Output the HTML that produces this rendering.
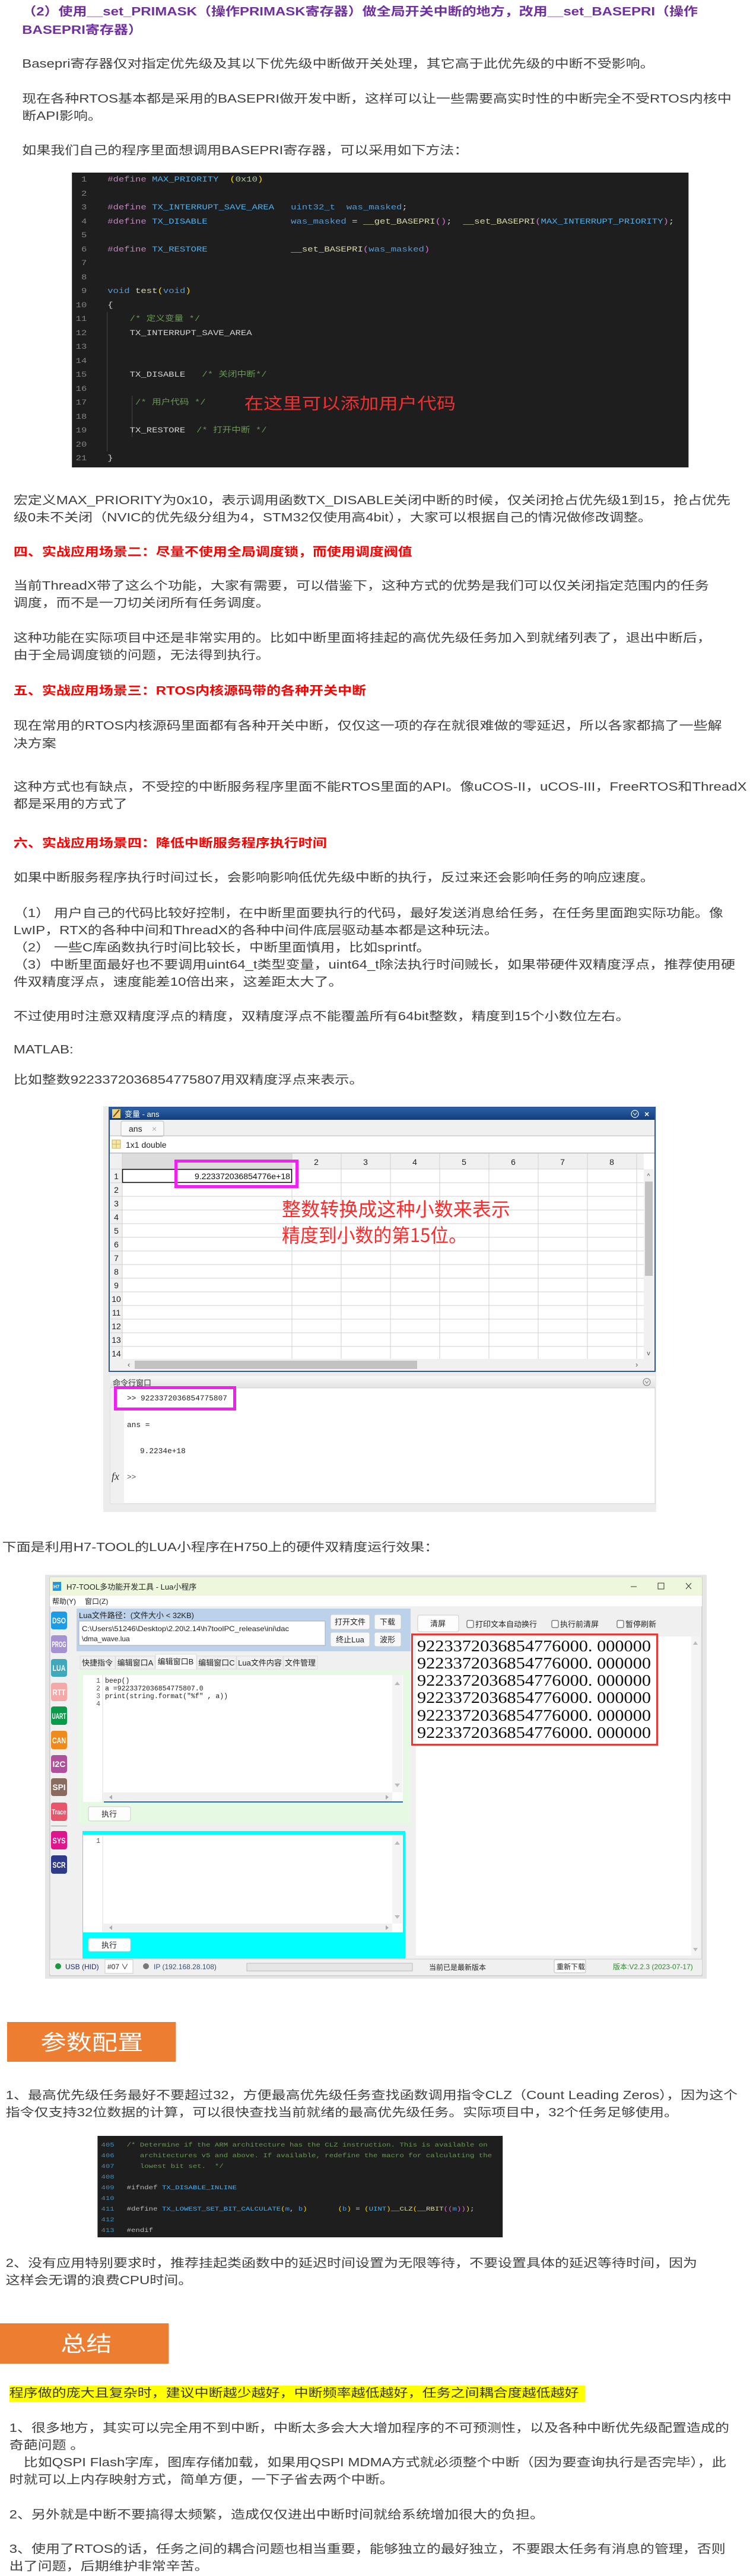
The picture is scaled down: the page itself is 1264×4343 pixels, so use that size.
<!DOCTYPE html>
<html><head><meta charset="utf-8">
<style>
html,body{margin:0;padding:0;background:#fff;}
body{width:1264px;height:4343px;position:relative;overflow:hidden;}
#w{position:absolute;left:0;top:0;width:1054px;height:4343px;transform:scaleX(1.2);transform-origin:0 0;}
.t{position:absolute;white-space:nowrap;font:20px/29px "Liberation Sans","Noto Sans CJK SC",sans-serif;color:#404040;}
.hp{color:#7030a0;font-weight:bold;line-height:31px;}
.hr{color:#ff0000;font-weight:bold;}
.code{position:absolute;background:#1e1e1e;overflow:hidden;font-family:"Liberation Mono","Noto Sans CJK SC",monospace;}
.code .ln{position:absolute;left:0;top:0;text-align:right;color:#858585;white-space:pre;}
.code .cd{position:absolute;top:0;color:#d4d4d4;white-space:pre;}
.k{color:#c586c0}.m{color:#4fb0f0}.b{color:#569cd6}.y{color:#ffd700}.n{color:#b5cea8}.f{color:#dcdcaa}.c{color:#6a9955}.p{color:#da70d6}
.box{position:absolute;background:#ed7d31;color:#fff;font:36px/1 "Noto Sans CJK SC","Liberation Sans",sans-serif;white-space:nowrap;}
svg{position:absolute;}
</style></head><body>
<div id="w">
<div class="t hp" style="left:31px;top:5px">（2）使用__set_PRIMASK（操作PRIMASK寄存器）做全局开关中断的地方，改用__set_BASEPRI（操作<br>BASEPRI寄存器）</div>
<div class="t" style="left:31px;top:94px">Basepri寄存器仅对指定优先级及其以下优先级中断做开关处理，其它高于此优先级的中断不受影响。</div>
<div class="t" style="left:31px;top:153px">现在各种RTOS基本都是采用的BASEPRI做开发中断，这样可以让一些需要高实时性的中断完全不受RTOS内核中<br>断API影响。</div>
<div class="t" style="left:31px;top:240px">如果我们自己的程序里面想调用BASEPRI寄存器，可以采用如下方法：</div>

<div class="code" style="left:101px;top:291px;width:866px;height:497px;font-size:13px;line-height:23.5px;">
<div class="ln" style="width:21px;padding-top:0px">1
2
3
4
5
6
7
8
9
10
11
12
13
14
15
16
17
18
19
20
21</div>
<div style="position:absolute;left:49px;top:235px;width:1px;height:235px;background:#404040"></div>
<div style="position:absolute;left:84px;top:376px;width:1px;height:70px;background:#404040"></div>
<div class="cd" style="left:50px"><span class="k">#define</span> <span class="m">MAX_PRIORITY</span>  <span class="y">(</span><span class="n">0x10</span><span class="y">)</span>

<span class="k">#define</span> <span class="m">TX_INTERRUPT_SAVE_AREA</span>   <span class="b">uint32_t</span>  <span class="b">was_masked</span>;
<span class="k">#define</span> <span class="m">TX_DISABLE</span>               <span class="b">was_masked</span> = <span class="f">__get_BASEPRI</span><span class="p">()</span>;  <span class="f">__set_BASEPRI</span><span class="p">(</span><span class="m">MAX_INTERRUPT_PRIORITY</span><span class="p">)</span>;

<span class="k">#define</span> <span class="m">TX_RESTORE</span>               <span class="f">__set_BASEPRI</span><span class="p">(</span><span class="b">was_masked</span><span class="p">)</span>


<span class="b">void</span> <span class="f">test</span><span class="y">(</span><span class="b">void</span><span class="y">)</span>
{
    <span class="c">/* 定义变量 */</span>
    TX_INTERRUPT_SAVE_AREA


    TX_DISABLE   <span class="c">/* 关闭中断*/</span>

     <span class="c">/* 用户代码 */</span>

    TX_RESTORE  <span class="c">/* 打开中断 */</span>

}</div>
<div style="position:absolute;left:242px;top:372px;font:27px/32px 'Noto Sans CJK SC',sans-serif;color:#f03030;white-space:nowrap">在这里可以添加用户代码</div>
</div>

<div class="t" style="left:19px;top:830px">宏定义MAX_PRIORITY为0x10，表示调用函数TX_DISABLE关闭中断的时候，仅关闭抢占优先级1到15，抢占优先<br>级0未不关闭（NVIC的优先级分组为4，STM32仅使用高4bit），大家可以根据自己的情况做修改调整。</div>
<div class="t hr" style="left:19px;top:917px">四、实战应用场景二：尽量不使用全局调度锁，而使用调度阀值</div>
<div class="t" style="left:19px;top:974px">当前ThreadX带了这么个功能，大家有需要，可以借鉴下，这种方式的优势是我们可以仅关闭指定范围内的任务<br>调度，而不是一刀切关闭所有任务调度。</div>
<div class="t" style="left:19px;top:1062px">这种功能在实际项目中还是非常实用的。比如中断里面将挂起的高优先级任务加入到就绪列表了，退出中断后，<br>由于全局调度锁的问题，无法得到执行。</div>
<div class="t hr" style="left:19px;top:1151px">五、实战应用场景三：RTOS内核源码带的各种开关中断</div>
<div class="t" style="left:19px;top:1209px;line-height:30px">现在常用的RTOS内核源码里面都有各种开关中断，仅仅这一项的存在就很难做的零延迟，所以各家都搞了一些解<br>决方案</div>
<div class="t" style="left:19px;top:1313px">这种方式也有缺点，不受控的中断服务程序里面不能RTOS里面的API。像uCOS-II，uCOS-III，FreeRTOS和ThreadX<br>都是采用的方式了</div>
<div class="t hr" style="left:19px;top:1408px">六、实战应用场景四：降低中断服务程序执行时间</div>
<div class="t" style="left:19px;top:1466px">如果中断服务程序执行时间过长，会影响影响低优先级中断的执行，反过来还会影响任务的响应速度。</div>
<div class="t" style="left:19px;top:1526px">（1） 用户自己的代码比较好控制，在中断里面要执行的代码，最好发送消息给任务，在任务里面跑实际功能。像<br>LwIP，RTX的各种中间和ThreadX的各种中间件底层驱动基本都是这种玩法。<br>（2） 一些C库函数执行时间比较长，中断里面慎用，比如sprintf。<br>（3）中断里面最好也不要调用uint64_t类型变量，uint64_t除法执行时间贼长，如果带硬件双精度浮点，推荐使用硬<br>件双精度浮点，速度能差10倍出来，这差距太大了。</div>
<div class="t" style="left:19px;top:1700px">不过使用时注意双精度浮点的精度，双精度浮点不能覆盖所有64bit整数，精度到15个小数位左右。</div>
<div class="t" style="left:19px;top:1756px">MATLAB:</div>
<div class="t" style="left:19px;top:1807px">比如整数9223372036854775807用双精度浮点来表示。</div>
<div class="t" style="left:3px;top:2595px">下面是利用H7-TOOL的LUA小程序在H750上的硬件双精度运行效果：</div>

<div class="box" style="left:10px;top:3409px;width:237px;height:67px;"><span style="position:absolute;left:47px;top:14px">参数配置</span></div>
<div class="t" style="left:8px;top:3519px">1、最高优先级任务最好不要超过32，方便最高优先级任务查找函数调用指令CLZ（Count Leading Zeros），因为这个<br>指令仅支持32位数据的计算，可以很快查找当前就绪的最高优先级任务。实际项目中，32个任务足够使用。</div>

<div class="code" style="left:137px;top:3601px;width:569px;height:171px;font-size:10.3px;line-height:18px;">
<div class="ln" style="left:5px;top:-11px;text-align:left;color:#3c8fc0">404
405
406
407
408
409
410
411
412
413</div>
<div class="cd" style="left:41px;top:-11px">
<span class="c">/* Determine if the ARM architecture has the CLZ instruction. This is available on</span>
<span class="c">   architectures v5 and above. If available, redefine the macro for calculating the</span>
<span class="c">   lowest bit set.  */</span>

<span style="color:#bbb">#ifndef</span> <span class="m">TX_DISABLE_INLINE</span>

<span style="color:#bbb">#define</span> <span class="m">TX_LOWEST_SET_BIT_CALCULATE</span><span class="y">(</span><span class="b">m</span>, <span class="b">b</span><span class="y">)</span>       <span class="y">(</span><span class="b">b</span><span class="y">)</span> = <span class="y">(</span><span class="m">UINT</span><span class="y">)</span><span class="f">__CLZ</span><span class="y">(</span><span class="f">__RBIT</span><span class="p">((</span><span class="b">m</span><span class="p">))</span><span class="y">)</span>;

<span style="color:#bbb">#endif</span></div>
</div>

<div class="t" style="left:8px;top:3802px">2、没有应用特别要求时，推荐挂起类函数中的延迟时间设置为无限等待，不要设置具体的延迟等待时间，因为<br>这样会无谓的浪费CPU时间。</div>

<div class="box" style="left:0px;top:3917px;width:237px;height:68px;"><span style="position:absolute;left:85px;top:14px">总结</span></div>
<div style="position:absolute;left:13px;top:4022px;width:809px;height:28px;background:#ffff00"></div>
<div class="t" style="left:13px;top:4021px;color:#3a3a10">程序做的庞大且复杂时，建议中断越少越好，中断频率越低越好，任务之间耦合度越低越好</div>
<div class="t" style="left:13px;top:4080px">1、很多地方，其实可以完全用不到中断，中断太多会大大增加程序的不可预测性，以及各种中断优先级配置造成的<br>奇葩问题 。<br>　比如QSPI Flash字库，图库存储加载，如果用QSPI MDMA方式就必须整个中断（因为要查询执行是否完毕），此<br>时就可以上内存映射方式，简单方便，一下子省去两个中断。</div>
<div class="t" style="left:13px;top:4226px">2、另外就是中断不要搞得太频繁，造成仅仅进出中断时间就给系统增加很大的负担。</div>
<div class="t" style="left:13px;top:4284px">3、使用了RTOS的话，任务之间的耦合问题也相当重要，能够独立的最好独立，不要跟太任务有消息的管理，否则<br>出了问题，后期维护非常辛苦。</div>
</div>

<!-- MATLAB window -->
<svg style="left:174px;top:1865px" width="932" height="684" viewBox="0 0 932 684" font-family="Liberation Sans, Noto Sans CJK SC, sans-serif">
<defs><linearGradient id="tb" x1="0" y1="0" x2="0" y2="1"><stop offset="0" stop-color="#2d62a8"/><stop offset="1" stop-color="#123d7c"/></linearGradient>
<linearGradient id="gh" x1="0" y1="0" x2="0" y2="1"><stop offset="0" stop-color="#f8f8f8"/><stop offset="1" stop-color="#e2e2e2"/></linearGradient></defs>
<rect x="0" y="0" width="932" height="684" fill="#ececec"/>
<rect x="10" y="2" width="920" height="445" fill="#fff"/>
<rect x="10" y="2" width="920" height="21" fill="url(#tb)"/>
<rect x="15" y="5" width="14" height="15" fill="#e8d27a"/><path d="M17 18 L27 6" stroke="#8a3b12" stroke-width="2"/>
<text x="36" y="18" font-size="13" fill="#fff">变量 - ans</text>
<circle cx="896" cy="13" r="6" fill="none" stroke="#fff" stroke-width="1.2"/><path d="M893 11 L896 15 L899 11" fill="none" stroke="#fff"/>
<text x="912" y="18" font-size="14" fill="#fff" font-weight="bold">×</text>
<rect x="10" y="23" width="920" height="27" fill="#f0f0f0"/>
<rect x="30" y="25" width="72" height="26" rx="3" fill="#f8f8f8" stroke="#b8b8b8"/>
<text x="43" y="43" font-size="14" fill="#222">ans</text><text x="82" y="43" font-size="14" fill="#aaa">×</text>
<line x1="10" y1="50" x2="930" y2="50" stroke="#b8b8b8"/>
<rect x="15" y="57" width="14" height="14" fill="#f6e7a4" stroke="#c9b060"/><path d="M22 57 V71 M15 64 H29" stroke="#c9b060"/>
<text x="38" y="70" font-size="14" fill="#222">1x1 double</text>
<rect x="10" y="78" width="920" height="2" fill="#c8c8c8"/>
<rect x="12" y="80" width="899" height="26" fill="#f0f0f0"/>
<rect x="12" y="106" width="20" height="320" fill="#f0f0f0"/>
<rect x="32" y="80" width="286" height="26" fill="#dcdcdc"/>
<g stroke="#d0d0d0" stroke-width="1">
<path d="M32 80V426 M318 80V426 M401 80V426 M484 80V426 M567 80V426 M650 80V426 M733 80V426 M816 80V426 M899 80V426"/>
<path d="M12 106H911 M12 129H911 M12 152H911 M12 175H911 M12 198H911 M12 221H911 M12 244H911 M12 267H911 M12 290H911 M12 313H911 M12 336H911 M12 359H911 M12 382H911 M12 405H911"/>
</g>
<g font-size="14" fill="#222" text-anchor="middle">
<text x="359" y="99">2</text><text x="442" y="99">3</text><text x="525" y="99">4</text><text x="608" y="99">5</text><text x="691" y="99">6</text><text x="774" y="99">7</text><text x="857" y="99">8</text>
<text x="22" y="123">1</text><text x="22" y="146">2</text><text x="22" y="169">3</text><text x="22" y="192">4</text><text x="22" y="215">5</text><text x="22" y="238">6</text><text x="22" y="261">7</text><text x="22" y="284">8</text><text x="22" y="307">9</text><text x="22" y="330">10</text><text x="22" y="353">11</text><text x="22" y="376">12</text><text x="22" y="399">13</text><text x="22" y="422">14</text>
</g>
<rect x="32.5" y="106.5" width="285" height="22" fill="#fff" stroke="#000" stroke-width="1.5"/>
<text x="154" y="123" font-size="14" fill="#111" textLength="161" lengthAdjust="spacingAndGlyphs">9.223372036854776e+18</text>
<rect x="122.5" y="92.5" width="204" height="43" fill="none" stroke="#f020f0" stroke-width="5"/>
<text x="301" y="185" font-size="32" fill="#ff2a2a" font-family="Noto Sans CJK SC, sans-serif" textLength="385" lengthAdjust="spacingAndGlyphs">整数转换成这种小数来表示</text>
<text x="301" y="229" font-size="32" fill="#ff2a2a" font-family="Noto Sans CJK SC, sans-serif" textLength="312" lengthAdjust="spacingAndGlyphs">精度到小数的第15位。</text>
<rect x="911" y="106" width="17" height="320" fill="#f0f0f0"/>
<rect x="913" y="127" width="13" height="159" fill="#c2c2c2"/>
<text x="919" y="121" font-size="11" fill="#555" text-anchor="middle">^</text><text x="919" y="420" font-size="11" fill="#555" text-anchor="middle">v</text>
<rect x="12" y="426" width="916" height="19" fill="#f0f0f0"/>
<rect x="53" y="429" width="476" height="14" fill="#c2c2c2"/>
<text x="41" y="440" font-size="13" fill="#555">‹</text><text x="897" y="440" font-size="13" fill="#555">›</text>
<rect x="10" y="2" width="920" height="445" fill="none" stroke="#2b5797" stroke-width="2"/>
<rect x="12" y="455" width="918" height="20" fill="url(#gh)"/>
<text x="16" y="471" font-size="13" fill="#333">命令行窗口</text>
<circle cx="916" cy="465" r="6" fill="none" stroke="#777"/><path d="M913 463 L916 467 L919 463" fill="none" stroke="#777"/>
<rect x="12" y="475" width="918" height="195" fill="#fff" stroke="#d0d0d0"/>
<rect x="12" y="475" width="23" height="195" fill="#f0f0f0"/>
<rect x="20.5" y="474.5" width="201" height="36" fill="#fff" stroke="#f020f0" stroke-width="5"/>
<text x="40" y="496" font-size="12.8" fill="#222" font-family="Liberation Mono, monospace">&gt;&gt; 9223372036854775807</text>
<text x="40" y="541" font-size="12.8" fill="#222" font-family="Liberation Mono, monospace">ans =</text>
<text x="62" y="585" font-size="12.8" fill="#222" font-family="Liberation Mono, monospace">9.2234e+18</text>
<text x="14" y="630" font-size="18" fill="#333" font-style="italic" font-family="Liberation Serif, serif">fx</text>
<text x="40" y="629" font-size="12.8" fill="#555" font-family="Liberation Mono, monospace">&gt;&gt;</text>
</svg>

<!-- H7-TOOL window -->
<svg style="left:76px;top:2655px" width="1115" height="681" viewBox="0 0 1115 681" font-family="Liberation Sans, Noto Sans CJK SC, sans-serif">
<rect x="0" y="0" width="1115" height="681" fill="#e6e6e6"/>
<rect x="8" y="4" width="1099" height="672" fill="#f0f0f0" stroke="#bdbdbd"/>
<rect x="8" y="4" width="1099" height="30" fill="#eef7dc"/>
<rect x="13" y="12" width="14" height="15" fill="#1e96e6"/><text x="14" y="23" font-size="8" fill="#fff" font-weight="bold">H7</text>
<text x="36" y="25" font-size="13" fill="#222">H7-TOOL多功能开发工具 - Lua小程序</text>
<path d="M987 20 H997" stroke="#333"/><rect x="1033" y="14" width="10" height="10" fill="none" stroke="#333"/>
<path d="M1080 14 L1089 24 M1089 14 L1080 24" stroke="#333"/>
<rect x="8" y="35" width="1099" height="18" fill="#fff"/>
<text x="12" y="49" font-size="12" fill="#222">帮助(Y)</text><text x="67" y="49" font-size="12" fill="#222">窗口(Z)</text>
<g font-size="14" font-weight="bold" fill="#fff" text-anchor="middle" font-family="Liberation Sans Narrow, Liberation Sans, sans-serif">
<rect x="10" y="62" width="27" height="30" rx="4" fill="#1e9be6"/><text x="23.5" y="82" textLength="23" lengthAdjust="spacingAndGlyphs">DSO</text>
<rect x="10" y="102" width="27" height="30" rx="4" fill="#a592d2"/><text x="23.5" y="122" textLength="24" lengthAdjust="spacingAndGlyphs">PROG</text>
<rect x="10" y="142" width="27" height="30" rx="4" fill="#3fa8bb"/><text x="23.5" y="162" textLength="22" lengthAdjust="spacingAndGlyphs">LUA</text>
<rect x="10" y="182" width="27" height="31" rx="4" fill="#f4a8a8"/><text x="23.5" y="203" textLength="22" lengthAdjust="spacingAndGlyphs">RTT</text>
<rect x="10" y="222" width="27" height="31" rx="4" fill="#0a9a4a"/><text x="23.5" y="243" textLength="24" lengthAdjust="spacingAndGlyphs">UART</text>
<rect x="10" y="263" width="27" height="31" rx="4" fill="#f08a1c"/><text x="23.5" y="284" textLength="23" lengthAdjust="spacingAndGlyphs">CAN</text>
<rect x="10" y="304" width="27" height="30" rx="4" fill="#b04f9c"/><text x="23.5" y="324" textLength="22" lengthAdjust="spacingAndGlyphs">I2C</text>
<rect x="10" y="343" width="27" height="30" rx="4" fill="#8b6a60"/><text x="23.5" y="363" textLength="22" lengthAdjust="spacingAndGlyphs">SPI</text>
<rect x="10" y="384" width="27" height="31" rx="4" fill="#e8566c"/><text x="23.5" y="404" textLength="24" lengthAdjust="spacingAndGlyphs" font-size="12">Trace</text>
<rect x="10" y="423" width="27" height="1" fill="#999"/>
<rect x="10" y="432" width="27" height="31" rx="4" fill="#e0148c"/><text x="23.5" y="453" textLength="22" lengthAdjust="spacingAndGlyphs">SYS</text>
<rect x="10" y="473" width="27" height="31" rx="4" fill="#2e3a8c"/><text x="23.5" y="494" textLength="22" lengthAdjust="spacingAndGlyphs">SCR</text>
</g>
<rect x="53" y="57" width="563" height="72" fill="#bcd2ea"/>
<text x="57" y="73" font-size="13" fill="#222">Lua文件路径：(文件大小 &lt; 32KB)</text>
<rect x="57" y="78" width="415" height="41" fill="#fff" stroke="#aab"/>
<text x="62" y="95" font-size="12" fill="#222" textLength="349" lengthAdjust="spacingAndGlyphs">C:\Users\51246\Desktop\2.20\2.14\h7toolPC_release\ini\dac</text>
<text x="62" y="112" font-size="12" fill="#222">\dma_wave.lua</text>
<g font-size="13" fill="#222" text-anchor="middle">
<rect x="481" y="67" width="66" height="25" rx="3" fill="#f8f8f8" stroke="#ccc"/><text x="514" y="84">打开文件</text>
<rect x="555" y="67" width="45" height="25" rx="3" fill="#f8f8f8" stroke="#ccc"/><text x="577" y="84">下载</text>
<rect x="481" y="97" width="66" height="24" rx="3" fill="#f8f8f8" stroke="#ccc"/><text x="514" y="114">终止Lua</text>
<rect x="555" y="97" width="45" height="24" rx="3" fill="#f8f8f8" stroke="#ccc"/><text x="577" y="114">波形</text>
<rect x="59" y="137" width="59" height="22" fill="#f0f0f0" stroke="#ddd"/><text x="88" y="153">快捷指令</text>
<rect x="119" y="137" width="66" height="22" fill="#f0f0f0" stroke="#ddd"/><text x="152" y="153">编辑窗口A</text>
<rect x="186" y="134" width="69" height="26" fill="#fafafa" stroke="#ddd"/><text x="220" y="151">编辑窗口B</text>
<rect x="256" y="137" width="66" height="22" fill="#f0f0f0" stroke="#ddd"/><text x="289" y="153">编辑窗口C</text>
<rect x="323" y="137" width="78" height="22" fill="#f0f0f0" stroke="#ddd"/><text x="362" y="153">Lua文件内容</text>
<rect x="402" y="137" width="57" height="22" fill="#f0f0f0" stroke="#ddd"/><text x="430" y="153">文件管理</text>
</g>
<rect x="55" y="160" width="561" height="260" fill="#e6fae3"/>
<rect x="64" y="169" width="539" height="214" fill="#fff"/>
<line x1="97" y1="169" x2="97" y2="383" stroke="#ddd"/>
<g font-size="11.5" fill="#222" font-family="Liberation Mono, monospace">
<text x="93" y="182" text-anchor="end" fill="#555">1</text><text x="93" y="195" text-anchor="end" fill="#555">2</text><text x="93" y="208" text-anchor="end" fill="#555">3</text><text x="93" y="221" text-anchor="end" fill="#555">4</text>
<text x="101" y="182">beep()</text><text x="101" y="195">a =9223372036854775807.0</text><text x="101" y="208">print(string.format("%f" , a))</text>
</g>
<rect x="585" y="169" width="17" height="198" fill="#f4f4f4"/>
<path d="M589 186 L593.5 180 L598 186Z M589 352 L593.5 358 L598 352Z" fill="#bbb"/>
<rect x="97" y="367" width="488" height="16" fill="#f0f0f0"/>
<path d="M113 371 L108 375 L113 379Z M574 371 L579 375 L574 379Z" fill="#aaa"/>
<rect x="99" y="382" width="504" height="2" fill="#2a6ebb"/>
<rect x="73" y="391" width="71" height="24" rx="3" fill="#fdfdfd" stroke="#ccc"/><text x="108" y="408" font-size="13" fill="#222" text-anchor="middle">执行</text>
<rect x="63" y="432" width="544" height="215" fill="#00ffff"/>
<rect x="64" y="438" width="539" height="165" fill="#fff"/>
<line x1="97" y1="438" x2="97" y2="603" stroke="#ddd"/>
<text x="93" y="452" font-size="11.5" fill="#555" text-anchor="end" font-family="Liberation Mono, monospace">1</text>
<rect x="585" y="438" width="17" height="150" fill="#f4f4f4"/>
<path d="M589 455 L593.5 449 L598 455Z M589 574 L593.5 580 L598 574Z" fill="#bbb"/>
<rect x="97" y="588" width="488" height="15" fill="#f0f0f0"/>
<path d="M113 591 L108 595 L113 599Z M574 591 L579 595 L574 599Z" fill="#aaa"/>
<rect x="73" y="613" width="71" height="22" rx="3" fill="#fdfdfd" stroke="#ccc"/><text x="108" y="629" font-size="13" fill="#222" text-anchor="middle">执行</text>
<rect x="628" y="68" width="69" height="28" rx="3" fill="#fdfdfd" stroke="#ccc"/><text x="662" y="87" font-size="13" fill="#222" text-anchor="middle">清屏</text>
<g font-size="13" fill="#222">
<rect x="711" y="77" width="11" height="12" rx="2" fill="#fff" stroke="#444"/><text x="725" y="88">打印文本自动换行</text>
<rect x="854" y="77" width="11" height="12" rx="2" fill="#fff" stroke="#444"/><text x="868" y="88">执行前清屏</text>
<rect x="964" y="77" width="11" height="12" rx="2" fill="#fff" stroke="#444"/><text x="978" y="88">暂停刷新</text>
</g>
<rect x="625" y="104" width="464" height="538" fill="#fff"/>
<rect x="1089" y="104" width="14" height="538" fill="#f4f4f4"/>
<path d="M1092 118 L1096 112 L1100 118Z M1092 629 L1096 635 L1100 629Z" fill="#bbb"/>
<rect x="618.5" y="100.5" width="413" height="186" fill="none" stroke="#e53935" stroke-width="3"/>
<g font-size="27" fill="#111" font-family="Liberation Serif, serif">
<text x="627" y="129" textLength="394" lengthAdjust="spacingAndGlyphs">9223372036854776000. 000000</text>
<text x="627" y="158" textLength="394" lengthAdjust="spacingAndGlyphs">9223372036854776000. 000000</text>
<text x="627" y="187" textLength="394" lengthAdjust="spacingAndGlyphs">9223372036854776000. 000000</text>
<text x="627" y="216" textLength="394" lengthAdjust="spacingAndGlyphs">9223372036854776000. 000000</text>
<text x="627" y="246" textLength="394" lengthAdjust="spacingAndGlyphs">9223372036854776000. 000000</text>
<text x="627" y="275" textLength="394" lengthAdjust="spacingAndGlyphs">9223372036854776000. 000000</text>
</g>
<rect x="8" y="648" width="1099" height="25" fill="#f0f0f0"/><line x1="8" y1="648" x2="1107" y2="648" stroke="#ccc"/>
<circle cx="22" cy="660" r="5" fill="#1a9a3a"/>
<g font-size="12">
<text x="34" y="665" fill="#1a2a7a">USB (HID)</text>
<rect x="101" y="649" width="47" height="23" fill="#fff" stroke="#ccc"/><text x="105" y="665" fill="#222">#07  ∨</text>
<circle cx="170" cy="660" r="5" fill="#777"/>
<text x="183" y="665" fill="#35507a">IP (192.168.28.108)</text>
<rect x="340" y="655" width="279" height="13" fill="#e6e6e6" stroke="#bbb"/>
<text x="647" y="666" fill="#222">当前已是最新版本</text>
<rect x="858" y="649" width="53" height="22" rx="2" fill="#fdfdfd" stroke="#bbb"/><text x="862" y="665" fill="#222">重新下载</text>
<text x="957" y="665" fill="#2e8b2e">版本:V2.2.3 (2023-07-17)</text>
</g>
</svg>
</body></html>
